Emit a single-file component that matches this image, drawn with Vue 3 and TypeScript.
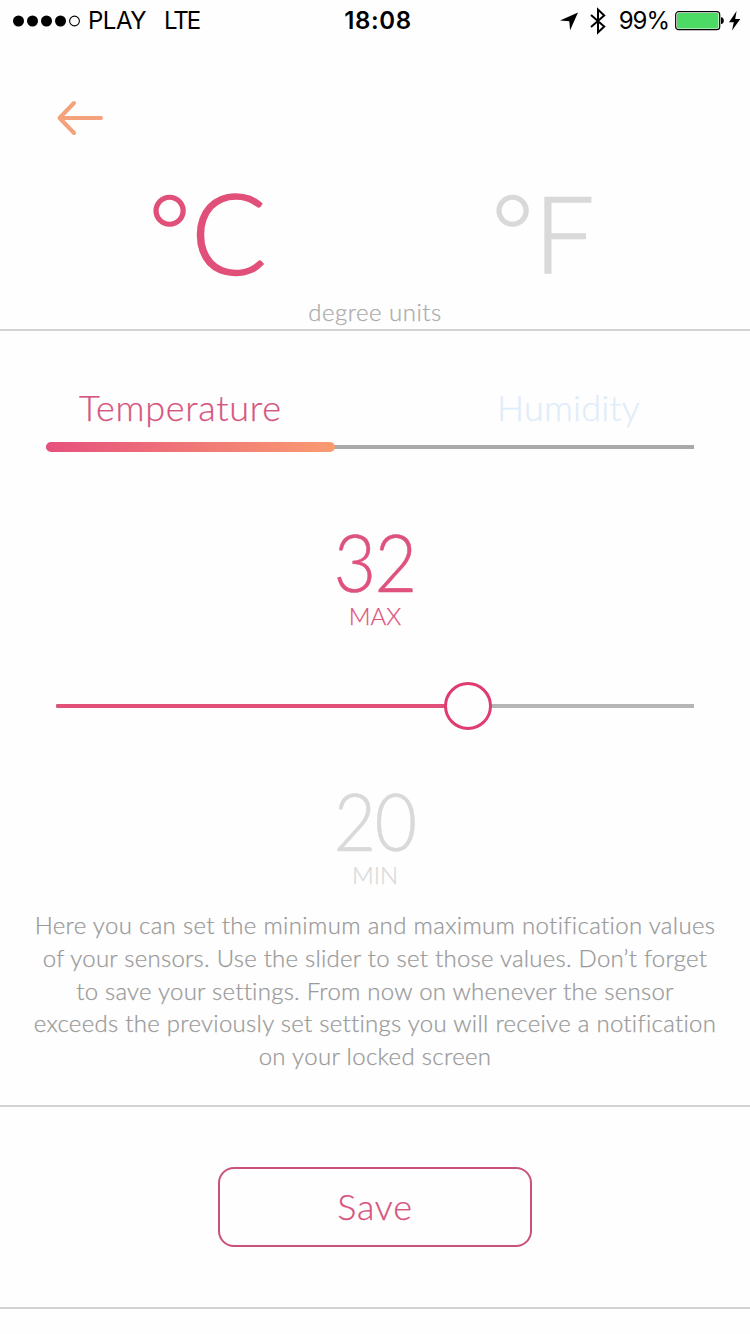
<script setup lang="ts">
import { ref, computed } from 'vue'

type Unit = 'C' | 'F'
type Tab = 'Temperature' | 'Humidity'

const unit = ref<Unit>('C')
const tab = ref<Tab>('Temperature')
const units: Unit[] = ['C', 'F']
const tabs: Tab[] = ['Temperature', 'Humidity']

const max = ref(32)
const min = ref(20)
const sliderPosition = ref(64.6)
const fillStyle = computed(() => ({ width: `${sliderPosition.value}%` }))
const knobStyle = computed(() => ({ left: `${sliderPosition.value}%` }))

const helpLines: string[] = [
  'Here you can set the minimum and maximum notification values',
  'of your sensors. Use the slider to set those values. Don’t forget',
  'to save your settings. From now on whenever the sensor',
  'exceeds the previously set settings you will receive a notification',
  'on your locked screen',
]
</script>

<template>
  <main class="screen">
    <header class="status">
      <div class="status-left">
        <svg class="signal" width="70" height="14" viewBox="0 0 70 14">
          <circle cx="6.5" cy="7" r="5.5" />
          <circle cx="20.5" cy="7" r="5.5" />
          <circle cx="34.5" cy="7" r="5.5" />
          <circle cx="48.5" cy="7" r="5.5" />
          <circle cx="62.5" cy="7" r="4.9" fill="none" stroke="#000" stroke-width="1.1" />
        </svg>
        <span class="carrier">PLAY</span>
        <span class="network">LTE</span>
      </div>
      <span class="clock">18:08</span>
      <div class="status-right">
        <svg class="location" width="18" height="19" viewBox="0 0 18 19">
          <path d="M18 0.5 L0 8.6 L9.3 9.2 L10.1 18.2 Z" />
        </svg>
        <svg class="bluetooth" width="16" height="28" viewBox="0 0 16 28">
          <path d="M1 8 L14.2 19.6 L8 25.4 V2.6 L14.2 8.4 L1 20" fill="none" stroke="#000" stroke-width="2" />
        </svg>
        <span class="percent">99%</span>
        <svg class="battery" width="49" height="20" viewBox="0 0 49 20">
          <rect x="0.7" y="0.7" width="44" height="18" rx="3" fill="#fff" stroke="#000" stroke-width="1.2" />
          <rect x="2" y="2" width="41.4" height="15.4" rx="1.6" fill="#4cd964" />
          <path d="M46 6.3 q2.8 0.4 2.8 3.4 q0 3 -2.8 3.4 Z" />
        </svg>
        <svg class="bolt" width="12" height="20" viewBox="0 0 12 20">
          <path d="M7.6 0 L0 11.2 H4.8 L3 19.6 L11.3 8 H6.2 Z" />
        </svg>
      </div>
    </header>

    <nav class="nav">
      <button class="back" aria-label="Back">
        <svg width="48" height="36" viewBox="0 0 48 36">
          <path d="M18 3 L3.5 18 L18 33 M4 18 H45" fill="none" stroke="#f3a27c" stroke-width="4" stroke-linecap="round" stroke-linejoin="round" />
        </svg>
      </button>
    </nav>

    <section class="units">
      <div class="unit-row">
        <button v-for="u in units" :key="u" class="unit" :class="['unit-' + u, { active: unit === u }]" @click="unit = u">
          <span class="degree">°</span><span class="letter">{{ u }}</span>
        </button>
      </div>
      <p class="caption">degree units</p>
    </section>

    <section class="limits">
      <div class="tabs">
        <button v-for="t in tabs" :key="t" class="tab" :class="['tab-' + t, { active: tab === t }]" @click="tab = t">{{ t }}</button>
      </div>
      <div class="tab-line"><i class="tab-marker"></i></div>

      <div class="value value-max">
        <strong>{{ max }}</strong>
        <span>MAX</span>
      </div>

      <div class="slider">
        <div class="slider-fill" :style="fillStyle"></div>
        <div class="slider-knob" :style="knobStyle"></div>
      </div>

      <div class="value value-min">
        <strong>{{ min }}</strong>
        <span>MIN</span>
      </div>

      <p class="help">
        <span v-for="(line, i) in helpLines" :key="i" class="help-line" :class="'help-' + i">{{ line }}</span>
      </p>
    </section>

    <section class="actions">
      <button class="save">Save</button>
    </section>
  </main>
</template>

<style>
body {
  margin: 0;
  background: #fefefe;
}
</style>

<style scoped>
.screen {
  box-sizing: border-box;
  width: 750px;
  height: 1334px;
  overflow: hidden;
  background: #fefefe;
  font-family: Lato, "Open Sans", sans-serif;
  font-weight: 300;
  -webkit-text-stroke: 0.25px currentColor;
}
button {
  margin: 0;
  padding: 0;
  border: 0;
  background: none;
  font: inherit;
  color: inherit;
}
p { margin: 0; }
svg { display: block; flex: none; }

.status {
  display: grid;
  grid-template-columns: 1fr auto 1fr;
  align-items: center;
  height: 41px;
  padding: 0 9px 0 12px;
  font-family: Inter, "Liberation Sans", sans-serif;
  font-size: 24px;
  font-weight: 400;
  line-height: 42px;
  color: #000;
  -webkit-text-stroke: 0;
}
.status-left, .status-right { display: flex; align-items: center; }
.status-right { justify-content: flex-end; }
.carrier { margin-left: 6px; letter-spacing: -0.5px; }
.network { margin-left: 18px; letter-spacing: -2px; }
.clock { margin-left: 3px; font-weight: 600; letter-spacing: 0.6px; }
.bluetooth { margin-left: 12px; }
.percent { margin-left: 13px; letter-spacing: -1px; }
.battery { margin-left: 6px; }
.bolt { margin-left: 5px; }

.nav { height: 139px; padding: 59px 0 0 56px; box-sizing: border-box; }
.back { display: block; }

.units { height: 149px; border-bottom: 2px solid #d2d2d2; }
.unit-row { display: grid; grid-template-columns: 1fr 1fr; height: 116px; }
.unit { display: flex; align-items: flex-start; color: #d9d9d9; -webkit-text-stroke: 1.6px currentColor; }
.unit.active { color: #e15079; }
.unit-C { padding-left: 148px; }
.unit-F { padding-left: 116px; }
.degree { width: 43px; margin-top: -5px; font-size: 102px; line-height: 109px; }
.letter { line-height: 109px; }
.unit-C .letter { margin-top: -3px; font-size: 112px; }
.unit-F .letter { margin-top: -3px; font-size: 107px; }
.caption { height: 33px; margin-top: -1px; text-align: center; font-size: 24px; line-height: 33px; letter-spacing: 0.5px; color: #aaa; }

.limits { height: 774px; border-bottom: 2px solid #d2d2d2; }
.tabs { display: flex; justify-content: space-between; height: 111px; padding: 0 110px 0 79px; }
.tab { padding-top: 43px; height: 109px; box-sizing: border-box; font-size: 36px; line-height: 66px; letter-spacing: 0.7px; color: #dfecf9; }
.tab-Humidity { letter-spacing: 0.15px; }
.tab.active { color: #d65480; }
.tab-line { display: flex; align-items: center; height: 10px; margin: 0 56px 0 46px; background: linear-gradient(#a9a9a9, #a9a9a9) 0 50% / 100% 4px no-repeat; }
.tab-marker { width: 289px; height: 10px; border-radius: 5px; background: linear-gradient(90deg, #e6517e, #f99b70); }

.value { display: flex; flex-direction: column; align-items: center; }
.value strong { margin-left: -2px; font-size: 80px; line-height: 80px; font-weight: 300; letter-spacing: -2px; transform: scaleX(0.92); -webkit-text-stroke: 0.5px currentColor; }
.value span { font-size: 24px; line-height: 30px; }
.value-max { height: 230px; padding-top: 69px; box-sizing: border-box; color: #de527d; }
.value-min { height: 155px; padding-top: 27px; margin-top: 23px; box-sizing: border-box; color: #d9d9d9; }

.slider { position: relative; display: flex; align-items: center; height: 48px; margin: 0 56px; background: linear-gradient(#b5b5b5, #b5b5b5) 0 50% / 100% 4px no-repeat; }
.slider-fill { height: 4px; border-radius: 2px; background: #e15079; }
.slider-knob { position: absolute; top: 0; width: 48px; height: 48px; margin-left: -24px; box-sizing: border-box; border: 3px solid #df3c70; border-radius: 50%; background: #fefefe; }

.help { display: flex; flex-direction: column; align-items: center; padding-top: 1px; font-size: 24px; line-height: 32.8px; color: #999; }
.help-line { white-space: nowrap; letter-spacing: 0.33px; }
.help-1, .help-2 { letter-spacing: 0.24px; }
.help-3 { letter-spacing: 0.28px; }

.actions { display: flex; justify-content: center; height: 200px; border-bottom: 2px solid #d2d2d2; }
.save { width: 314px; height: 80px; margin-top: 60px; padding-bottom: 3px; box-sizing: border-box; border: 2px solid #c9527a; border-radius: 16px; font-size: 36px; color: #d65480; letter-spacing: 0.7px; }
</style>
